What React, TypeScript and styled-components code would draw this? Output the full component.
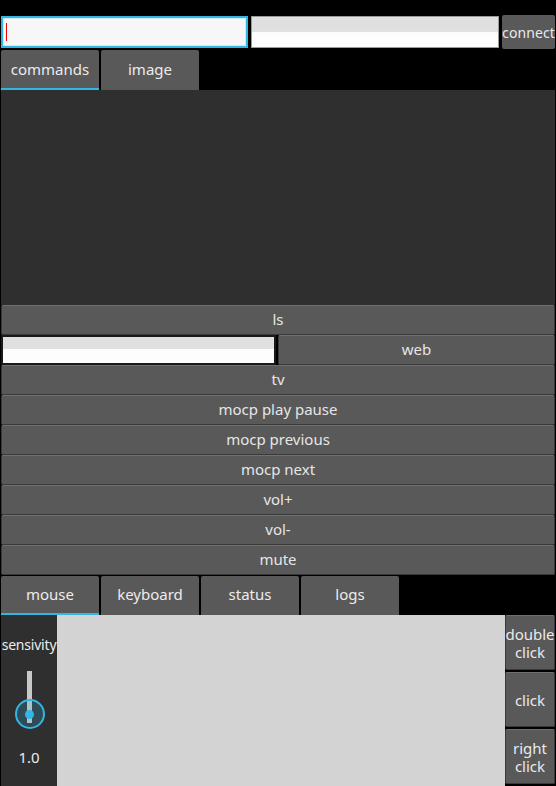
import React from "react";
import styled, { createGlobalStyle, css } from "styled-components";

const Global = createGlobalStyle`
  html, body { margin: 0; padding: 0; background: #000; }
  body { font-family: "Noto Sans", "Open Sans", sans-serif; }
  * { box-sizing: border-box; }
`;

const Screen = styled.div`
  width: 556px;
  height: 786px;
  background: #000;
  display: flex;
  flex-direction: column;
  overflow: hidden;
  padding-top: 15px;
`;

const TopBar = styled.div`
  display: flex;
  height: 34px;
  padding: 0 1px;
  gap: 3px;
  align-items: stretch;
`;

const Field = styled.div<{ $focused?: boolean; $w: number }>`
  width: ${(p) => p.$w}px;
  flex: none;
  position: relative;
  border: 1px solid #9a9a9a;
  margin: 1px 0;
  background: linear-gradient(#e0e0e0 0, #e0e0e0 48%, #fdfdfd 52%, #fdfdfd 100%);
  ${(p) =>
    p.$focused &&
    css`
      border: 2px solid #33b5e5;
      background: #f7f7f7;
      box-shadow: inset 0 0 0 1px #cfe9f3;
    `}
`;

const Caret = styled.span`
  position: absolute;
  left: 3px;
  top: 5px;
  width: 1px;
  height: 18px;
  background: #e00;
`;

const SmallButton = styled.div`
  flex: 1;
  background: #595959;
  border-radius: 2px;
  color: #eaeaea;
  font-size: 14px;
  letter-spacing: 0.1px;
  display: flex;
  align-items: center;
  justify-content: center;
  overflow: hidden;
  white-space: nowrap;
`;

const TabRow = styled.div<{ $h: number }>`
  display: flex;
  height: ${(p) => p.$h}px;
  padding: 1px 1px 0;
  gap: 2px;
  flex: none;
`;

const Tab = styled.div<{ $active?: boolean }>`
  width: 98px;
  background: #595959;
  color: #ececec;
  font-size: 15px;
  display: flex;
  align-items: center;
  justify-content: center;
  border-radius: 2px 2px 0 0;
  border-bottom: 2px solid ${(p) => (p.$active ? "#33b5e5" : "#595959")};
  padding-bottom: 1px;
`;

const Output = styled.div`
  height: 215px;
  margin: 0 1px;
  background: #2f2f2f;
  flex: none;
`;

const ButtonList = styled.div`
  display: flex;
  flex-direction: column;
  padding: 0 1px;
  flex: none;
`;

const Row = styled.div`
  display: flex;
  height: 30px;
  gap: 2px;
`;

const CmdButton = styled.div`
  flex: 1;
  height: 30px;
  background: #595959;
  border: 1px solid #3a3a3a;
  border-top-color: #707070;
  border-radius: 2px;
  color: #e6e6e6;
  font-size: 15px;
  display: flex;
  align-items: center;
  justify-content: center;
  padding-bottom: 2px;
`;

const RowField = styled.div`
  width: 275px;
  flex: none;
  height: 30px;
  border: 2px solid #1a1a1a;
  background: linear-gradient(#e0e0e0 0, #e0e0e0 45%, #fdfdfd 48%, #fdfdfd 100%);
`;

const Bottom = styled.div`
  flex: 1;
  display: flex;
  padding: 0 1px;
`;

const SidePanel = styled.div`
  width: 56px;
  background: #2f2f2f;
  display: flex;
  flex-direction: column;
  align-items: center;
  color: #ececec;
  font-size: 14px;
  padding-top: 20px;
`;

const SideLabel = styled.div`
  white-space: nowrap;
  letter-spacing: -0.2px;
  line-height: 19px;
`;

const SliderBox = styled.div`
  position: relative;
  width: 30px;
  height: 58px;
  margin-top: 17px;
  margin-left: 1px;
`;

const Track = styled.div`
  position: absolute;
  left: 12px;
  top: 0;
  width: 5px;
  height: 52px;
  background: #c8c8c8;
`;

const Thumb = styled.div`
  position: absolute;
  left: 0;
  top: 28px;
  width: 30px;
  height: 30px;
  border-radius: 50%;
  border: 2px solid #33b5e5;
  background: rgba(51, 181, 229, 0.22);
  display: flex;
  align-items: center;
  justify-content: center;
  &::after {
    content: "";
    width: 9px;
    height: 9px;
    border-radius: 50%;
    background: #33b5e5;
  }
`;

const Value = styled.div`
  margin-top: 18px;
  font-size: 15px;
  line-height: 20px;
`;

const Pad = styled.div`
  flex: 1;
  background: #d3d3d3;
`;

const ClickColumn = styled.div`
  width: 50px;
  display: flex;
  flex-direction: column;
  gap: 2px;
  padding-bottom: 2px;
`;

const ClickButton = styled.div`
  flex: 1;
  background: #595959;
  border: 1px solid #3a3a3a;
  border-top-color: #707070;
  border-radius: 2px;
  color: #eaeaea;
  font-size: 15px;
  line-height: 18px;
  display: flex;
  align-items: center;
  justify-content: center;
  text-align: center;
  white-space: pre-line;
`;

const commands = ["tv", "mocp play pause", "mocp previous", "mocp next", "vol+", "vol-", "mute"];

export default function App() {
  return (
    <>
      <Global />
      <Screen>
        <TopBar>
          <Field $focused $w={247}>
            <Caret />
          </Field>
          <Field $w={248} />
          <SmallButton>connect</SmallButton>
        </TopBar>
        <TabRow $h={41}>
          <Tab $active>commands</Tab>
          <Tab>image</Tab>
        </TabRow>
        <Output />
        <ButtonList>
          <Row>
            <CmdButton>ls</CmdButton>
          </Row>
          <Row>
            <RowField />
            <CmdButton>web</CmdButton>
          </Row>
          {commands.map((c) => (
            <Row key={c}>
              <CmdButton>{c}</CmdButton>
            </Row>
          ))}
        </ButtonList>
        <TabRow $h={40}>
          <Tab $active>mouse</Tab>
          <Tab>keyboard</Tab>
          <Tab>status</Tab>
          <Tab>logs</Tab>
        </TabRow>
        <Bottom>
          <SidePanel>
            <SideLabel>sensivity</SideLabel>
            <SliderBox>
              <Track />
              <Thumb />
            </SliderBox>
            <Value>1.0</Value>
          </SidePanel>
          <Pad />
          <ClickColumn>
            <ClickButton>{"double\nclick"}</ClickButton>
            <ClickButton>click</ClickButton>
            <ClickButton>{"right\nclick"}</ClickButton>
          </ClickColumn>
        </Bottom>
      </Screen>
    </>
  );
}
